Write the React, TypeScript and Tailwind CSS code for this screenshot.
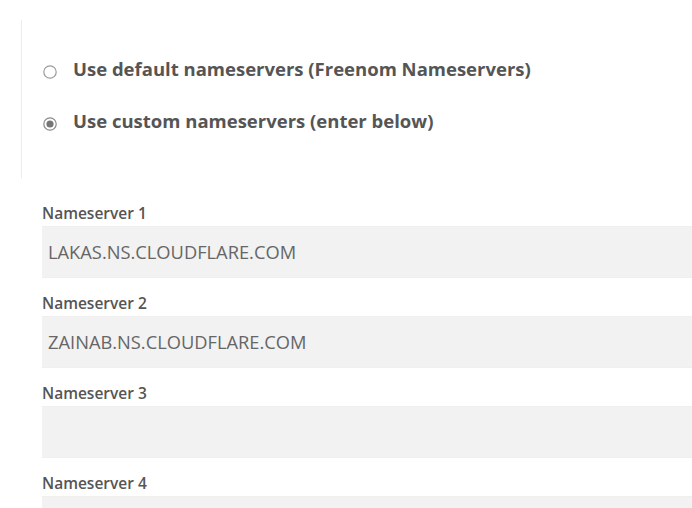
import React from 'react';

const fields = [
  { label: 'Nameserver 1', value: 'LAKAS.NS.CLOUDFLARE.COM' },
  { label: 'Nameserver 2', value: 'ZAINAB.NS.CLOUDFLARE.COM' },
  { label: 'Nameserver 3', value: '' },
  { label: 'Nameserver 4', value: '' },
];

const Radio: React.FC<{ checked?: boolean }> = ({ checked }) => (
  <svg width="14" height="14" viewBox="0 0 14 14" className="shrink-0 self-start mt-[9px]">
    <circle cx="7" cy="7" r="6.2" fill="#fff" stroke={checked ? '#8a8a8a' : '#9b9b9b'} strokeWidth="1.2" />
    {checked && <circle cx="7" cy="7" r="3.6" fill="#767676" />}
  </svg>
);

export default function App() {
  return (
    <div className="w-[692px] h-[508px] overflow-hidden bg-white font-['Open_Sans',sans-serif]">
      <div className="ml-[21px] mt-[20px] border-l border-[#ececec] pl-[21px] pt-[36px] pb-[44px]">
        <div className="flex flex-col gap-[26px]">
          <label className="flex gap-[16px] h-[26px] text-[18.5px] leading-[26px] font-bold text-[#555]">
            <Radio />
            <span>Use default nameservers (Freenom Nameservers)</span>
          </label>
          <label className="flex gap-[16px] h-[26px] text-[18.5px] leading-[26px] font-bold text-[#555]">
            <Radio checked />
            <span>Use custom nameservers (enter below)</span>
          </label>
        </div>
      </div>

      <div className="pl-[42px] pt-[25px] flex flex-col gap-[15px]">
        {fields.map((f) => (
          <div key={f.label} className="flex flex-col gap-[3px]">
            <div className="text-[15.5px] leading-[20px] font-semibold text-[#555]">{f.label}</div>
            <div className="h-[52px] w-[700px] bg-[#f2f2f2] border-y border-[#efefef] flex items-center pl-[6px] text-[18.3px] text-[#666]">
              {f.value}
            </div>
          </div>
        ))}
      </div>
    </div>
  );
}
